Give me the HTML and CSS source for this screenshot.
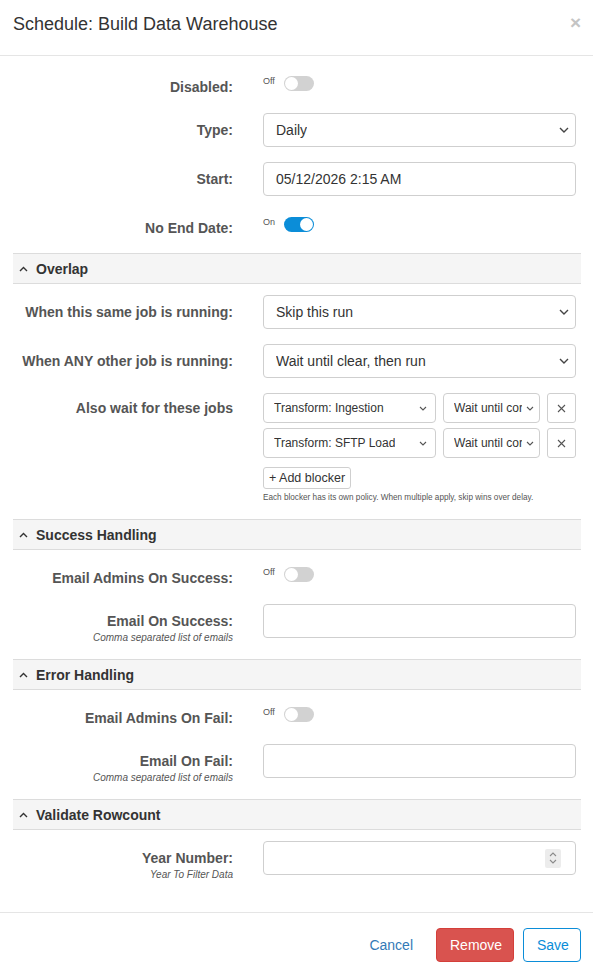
FILE: index.html
```html
<!DOCTYPE html>
<html lang="en">
<head>
    <meta charset="UTF-8">
    <meta name="viewport" content="width=device-width, initial-scale=1.0">
    <title>Schedule: Build Data Warehouse</title>
    <link rel="stylesheet" href="styles.css">
</head>
<body>

<div class="modal">
    <!-- Cabecera -->
    <div class="modal-header">
        <h4 class="modal-title">Schedule: Build Data Warehouse</h4>
        <span class="close">&times;</span>
    </div>

    <div class="modal-body">
        <div class="form-row toggle-row">
            <label class="form-label">Disabled:</label>
            <div class="toggle-cell">
                <span class="toggle-text">Off</span>
                <span class="toggle"><span class="knob"></span></span>
            </div>
        </div>

        <div class="form-row">
            <label class="form-label">Type:</label>
            <div class="select">
                <span>Daily</span>
                <svg class="chev" width="10" height="6" viewBox="0 0 10 6"><path d="M1 1l4 4 4-4" fill="none" stroke="#444" stroke-width="1.4"/></svg>
            </div>
        </div>

        <div class="form-row">
            <label class="form-label">Start:</label>
            <div class="input">05/12/2026 2:15 AM</div>
        </div>

        <div class="form-row toggle-row before-section">
            <label class="form-label">No End Date:</label>
            <div class="toggle-cell">
                <span class="toggle-text">On</span>
                <span class="toggle on"><span class="knob"></span></span>
            </div>
        </div>

        <!-- Overlap -->
        <div class="section-head">
            <svg width="9" height="6" viewBox="0 0 9 6"><path d="M1 5l3.5-3.5 3.5 3.5" fill="none" stroke="#333" stroke-width="1.4"/></svg>
            <span>Overlap</span>
        </div>

        <div class="form-row">
            <label class="form-label">When this same job is running:</label>
            <div class="select">
                <span>Skip this run</span>
                <svg class="chev" width="10" height="6" viewBox="0 0 10 6"><path d="M1 1l4 4 4-4" fill="none" stroke="#444" stroke-width="1.4"/></svg>
            </div>
        </div>

        <div class="form-row">
            <label class="form-label">When ANY other job is running:</label>
            <div class="select">
                <span>Wait until clear, then run</span>
                <svg class="chev" width="10" height="6" viewBox="0 0 10 6"><path d="M1 1l4 4 4-4" fill="none" stroke="#444" stroke-width="1.4"/></svg>
            </div>
        </div>

        <div class="form-row">
            <label class="form-label blockers-label">Also wait for these jobs</label>
            <div class="blockers">
                <div class="blocker">
                    <div class="select small job">
                        <span>Transform: Ingestion</span>
                        <svg class="chev" width="8" height="5" viewBox="0 0 8 5"><path d="M1 1l3 3 3-3" fill="none" stroke="#555" stroke-width="1.1"/></svg>
                    </div>
                    <div class="select small policy">
                        <span>Wait until cor</span>
                        <svg class="chev" width="8" height="5" viewBox="0 0 8 5"><path d="M1 1l3 3 3-3" fill="none" stroke="#555" stroke-width="1.1"/></svg>
                    </div>
                    <button class="remove-blocker"><svg width="9" height="9" viewBox="0 0 9 9"><path d="M1 1l7 7M8 1l-7 7" stroke="#555" stroke-width="1.1"/></svg></button>
                </div>
                <div class="blocker">
                    <div class="select small job">
                        <span>Transform: SFTP Load</span>
                        <svg class="chev" width="8" height="5" viewBox="0 0 8 5"><path d="M1 1l3 3 3-3" fill="none" stroke="#555" stroke-width="1.1"/></svg>
                    </div>
                    <div class="select small policy">
                        <span>Wait until cor</span>
                        <svg class="chev" width="8" height="5" viewBox="0 0 8 5"><path d="M1 1l3 3 3-3" fill="none" stroke="#555" stroke-width="1.1"/></svg>
                    </div>
                    <button class="remove-blocker"><svg width="9" height="9" viewBox="0 0 9 9"><path d="M1 1l7 7M8 1l-7 7" stroke="#555" stroke-width="1.1"/></svg></button>
                </div>
                <button class="add-blocker">+ Add blocker</button>
                <div class="blockers-help">Each blocker has its own policy. When multiple apply, skip wins over delay.</div>
            </div>
        </div>

        <!-- Success Handling -->
        <div class="section-head">
            <svg width="9" height="6" viewBox="0 0 9 6"><path d="M1 5l3.5-3.5 3.5 3.5" fill="none" stroke="#333" stroke-width="1.4"/></svg>
            <span>Success Handling</span>
        </div>

        <div class="form-row toggle-row">
            <label class="form-label">Email Admins On Success:</label>
            <div class="toggle-cell">
                <span class="toggle-text">Off</span>
                <span class="toggle"><span class="knob"></span></span>
            </div>
        </div>

        <div class="form-row">
            <div class="form-label">
                <label>Email On Success:</label>
                <div class="help">Comma separated list of emails</div>
            </div>
            <div class="input"></div>
        </div>

        <!-- Error Handling -->
        <div class="section-head">
            <svg width="9" height="6" viewBox="0 0 9 6"><path d="M1 5l3.5-3.5 3.5 3.5" fill="none" stroke="#333" stroke-width="1.4"/></svg>
            <span>Error Handling</span>
        </div>

        <div class="form-row toggle-row">
            <label class="form-label">Email Admins On Fail:</label>
            <div class="toggle-cell">
                <span class="toggle-text">Off</span>
                <span class="toggle"><span class="knob"></span></span>
            </div>
        </div>

        <div class="form-row">
            <div class="form-label">
                <label>Email On Fail:</label>
                <div class="help">Comma separated list of emails</div>
            </div>
            <div class="input"></div>
        </div>

        <!-- Validate Rowcount -->
        <div class="section-head">
            <svg width="9" height="6" viewBox="0 0 9 6"><path d="M1 5l3.5-3.5 3.5 3.5" fill="none" stroke="#333" stroke-width="1.4"/></svg>
            <span>Validate Rowcount</span>
        </div>

        <div class="form-row year-row">
            <div class="form-label">
                <label>Year Number:</label>
                <div class="help">Year To Filter Data</div>
            </div>
            <div class="input number">
                <span class="spinner">
                    <svg width="8" height="14" viewBox="0 0 8 14"><path d="M1 5l3-3 3 3M1 9l3 3 3-3" fill="none" stroke="#8a8a8a" stroke-width="1.1"/></svg>
                </span>
            </div>
        </div>
    </div>

    <!-- Pie con botones -->
    <div class="modal-footer">
        <button class="btn btn-link">Cancel</button>
        <button class="btn btn-danger">Remove</button>
        <button class="btn btn-save">Save</button>
    </div>
</div>

</body>
</html>
```

FILE: styles.css
```css
body {
    margin: 0;
    font-family: 'Liberation Sans', Arial, sans-serif;
    font-size: 14px;
    color: #333;
    background-color: #ffffff;
}
.modal {
    display: flex;
    flex-direction: column;
    min-height: 100vh;
}
.modal-header {
    height: 56px;
    box-sizing: border-box;
    padding: 12px 12px 0 13px;
    border-bottom: 1px solid #e5e5e5;
    display: flex;
    justify-content: space-between;
    align-items: flex-start;
}
.modal-title {
    margin: 0;
    font-size: 18px;
    font-weight: normal;
    line-height: 25px;
    color: #333;
}
.close {
    font-size: 19px;
    font-weight: bold;
    line-height: 22px;
    color: #c4c4c4;
    margin-right: 0;
}
.modal-body {
    padding: 14px 12px 0 13px;
}

/* Filas del formulario */
.form-row {
    display: grid;
    grid-template-columns: 220px 1fr;
    column-gap: 30px;
    padding-right: 5px;
    margin-bottom: 15px;
}
.form-row.before-section {
    margin-bottom: 14px;
}
.form-label {
    text-align: right;
    font-weight: bold;
    color: #555;
    padding-top: 7px;
    line-height: 20px;
}
.form-label label {
    display: block;
}
.help {
    font-size: 10px;
    font-weight: normal;
    font-style: italic;
    line-height: 13px;
    color: #555;
}
.toggle-row {
    height: 28px;
}
.toggle-cell {
    display: flex;
    align-items: flex-start;
    gap: 9px;
    padding-top: 5px;
}
.toggle-text {
    font-size: 9px;
    line-height: 10px;
    color: #555;
    padding-top: 1px;
}
.toggle {
    position: relative;
    width: 30px;
    height: 15px;
    border-radius: 8px;
    background-color: #d2d2d2;
    margin-top: 1px;
}
.toggle .knob {
    position: absolute;
    left: 1px;
    top: 1px;
    width: 13px;
    height: 13px;
    border-radius: 50%;
    background-color: #ffffff;
}
.toggle.on {
    background-color: #0b8dd8;
}
.toggle.on .knob {
    left: 16px;
}

/* Campos */
.input, .select {
    height: 34px;
    box-sizing: border-box;
    border: 1px solid #cfcfcf;
    border-radius: 4px;
    padding: 0 12px;
    display: flex;
    align-items: center;
    font-size: 14px;
    color: #333;
    background-color: #ffffff;
}
.select {
    justify-content: space-between;
    padding-right: 6px;
}
.select span {
    white-space: nowrap;
    overflow: hidden;
}
.chev {
    flex: none;
    margin-left: 4px;
}

/* Cabecera de seccion */
.section-head {
    height: 31px;
    box-sizing: border-box;
    border-top: 1px solid #dcdcdc;
    border-bottom: 1px solid #dcdcdc;
    background-color: #f5f5f5;
    display: flex;
    align-items: center;
    gap: 8px;
    padding-left: 6px;
    margin-bottom: 11px;
    font-weight: bold;
    color: #333;
}

/* Bloqueadores */
.blockers-label {
    padding-top: 5px;
}
.blockers {
    display: flex;
    flex-direction: column;
    align-items: flex-start;
}
.blocker {
    display: flex;
    gap: 7px;
    margin-bottom: 5px;
    width: 100%;
}
.select.small {
    height: 30px;
    font-size: 12px;
    padding: 0 8px 0 10px;
}
.select.job {
    width: 173px;
}
.select.policy {
    width: 97px;
    padding-right: 5px;
}
.remove-blocker {
    width: 29px;
    height: 30px;
    border: 1px solid #cfcfcf;
    border-radius: 3px;
    background-color: #ffffff;
    padding: 0;
    display: flex;
    align-items: center;
    justify-content: center;
}
.add-blocker {
    margin-top: 4px;
    height: 22px;
    padding: 0 5px;
    border: 1px solid #cfcfcf;
    border-radius: 3px;
    background-color: #ffffff;
    font-family: inherit;
    font-size: 12.5px;
    color: #333;
}
.blockers-help {
    font-size: 8.2px;
    color: #555;
    margin-top: 3px;
    line-height: 12px;
}

.year-row {
    margin-top: 3px;
}
.input.number {
    justify-content: flex-end;
    padding-right: 14px;
}
.spinner {
    width: 16px;
    height: 19px;
    background-color: #ececec;
    display: flex;
    align-items: center;
    justify-content: center;
    border-radius: 2px;
}

/* Pie */
.modal-footer {
    margin-top: auto;
    border-top: 1px solid #e5e5e5;
    padding: 15px 12px 12px 13px;
    display: flex;
    justify-content: flex-end;
    gap: 9px;
}
.btn {
    height: 34px;
    padding: 0 13px;
    font-family: inherit;
    font-size: 14px;
    border-radius: 4px;
    border: 1px solid transparent;
    background-color: transparent;
}
.btn-link {
    color: #337ab7;
    padding: 0 12px;
    margin-right: 1px;
}
.btn-danger {
    background-color: #d9534f;
    border-color: #d43f3a;
    color: #ffffff;
    width: 78px;
}
.btn-save {
    border-color: #0b8dd8;
    color: #0b8dd8;
    background-color: #ffffff;
    width: 58px;
}
```
